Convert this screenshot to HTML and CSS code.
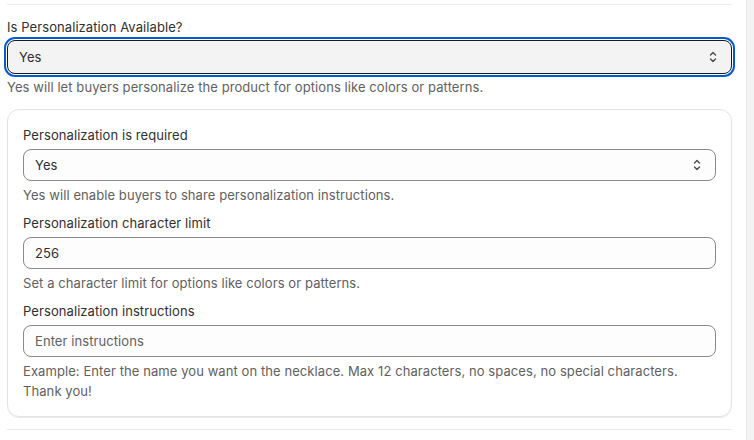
FILE: index.html
```html
<!DOCTYPE html>
<html lang="en">
<head>
    <meta charset="UTF-8">
    <meta name="viewport" content="width=device-width, initial-scale=1.0">
    <title>Personalization</title>
    <link rel="stylesheet" href="styles.css">
</head>
<body>
    <div class="page">
        <main class="main">
            <hr class="divider">

            <div class="field field-top">
                <label class="label">Is Personalization Available?</label>
                <div class="select select-focused">
                    <span>Yes</span>
                    <svg class="select-icon" viewBox="0 0 20 20" width="20" height="20"><polyline points="7.5,8 10,5.5 12.5,8"/><polyline points="7.5,12 10,14.5 12.5,12"/></svg>
                </div>
                <p class="help">Yes will let buyers personalize the product for options like colors or patterns.</p>
            </div>

            <div class="card">
                <div class="field">
                    <label class="label">Personalization is required</label>
                    <div class="select">
                        <span>Yes</span>
                        <svg class="select-icon" viewBox="0 0 20 20" width="20" height="20"><polyline points="7.5,8 10,5.5 12.5,8"/><polyline points="7.5,12 10,14.5 12.5,12"/></svg>
                    </div>
                    <p class="help">Yes will enable buyers to share personalization instructions.</p>
                </div>

                <div class="field">
                    <label class="label" for="charLimit">Personalization character limit</label>
                    <input class="input" type="text" id="charLimit" value="256">
                    <p class="help">Set a character limit for options like colors or patterns.</p>
                </div>

                <div class="field">
                    <label class="label" for="instructions">Personalization instructions</label>
                    <input class="input" type="text" id="instructions" placeholder="Enter instructions">
                    <p class="help">Example: Enter the name you want on the necklace. Max 12 characters, no spaces, no special characters. Thank you!</p>
                </div>
            </div>

            <hr class="divider divider-bottom">
        </main>
        <aside class="side"></aside>
    </div>
</body>
</html>
```

FILE: styles.css
```css
* {
    box-sizing: border-box;
}
body {
    margin: 0;
    font-family: Inter, "Noto Sans", Arial, sans-serif;
    font-size: 13px;
    line-height: 20px;
    letter-spacing: 0.08px;
    color: #303030;
    background-color: #ffffff;
}
.page {
    display: flex;
    min-height: 440px;
}
.main {
    width: 746px;
    padding: 4px 14px 0 7px;
}
.side {
    flex: 1;
    background-color: #f3f3f3;
    border-left: 1px solid #ebebeb;
}
.divider {
    margin: 0;
    border: none;
    border-top: 1px solid #ebebeb;
}
.divider-bottom {
    margin-top: 12px;
}
.field {
    display: flex;
    flex-direction: column;
    gap: 4px;
}
.field + .field {
    margin-top: 8px;
}
.field-top {
    padding-top: 12px;
}
.label {
    display: block;
    color: #303030;
}
.help {
    margin: 0;
    color: #616161;
}
.select {
    display: flex;
    align-items: center;
    justify-content: space-between;
    height: 32px;
    padding: 0 8px 0 11px;
    border: 1px solid #8a8a8a;
    border-radius: 8px;
    background-color: #fdfdfd;
}
.select-focused {
    height: 34px;
    margin: -1px 0 -1px;
    border-color: #1a1a1a;
    background-color: #f3f3f3;
    outline: 2px solid #005bd3;
    outline-offset: 1px;
}
.select-icon {
    fill: none;
    stroke: #4a4a4a;
    stroke-width: 1.4;
    stroke-linecap: round;
    stroke-linejoin: round;
}
.input {
    height: 32px;
    width: 100%;
    padding: 0 11px;
    font-family: inherit;
    font-size: 13px;
    letter-spacing: inherit;
    color: #303030;
    border: 1px solid #8a8a8a;
    border-radius: 8px;
    background-color: #fdfdfd;
}
.input::placeholder {
    color: #616161;
}
.card {
    margin-top: 12px;
    padding: 15px;
    border: 1px solid #e3e3e3;
    border-radius: 12px;
    box-shadow: 0 1px 0 rgba(0, 0, 0, 0.08);
}
```
